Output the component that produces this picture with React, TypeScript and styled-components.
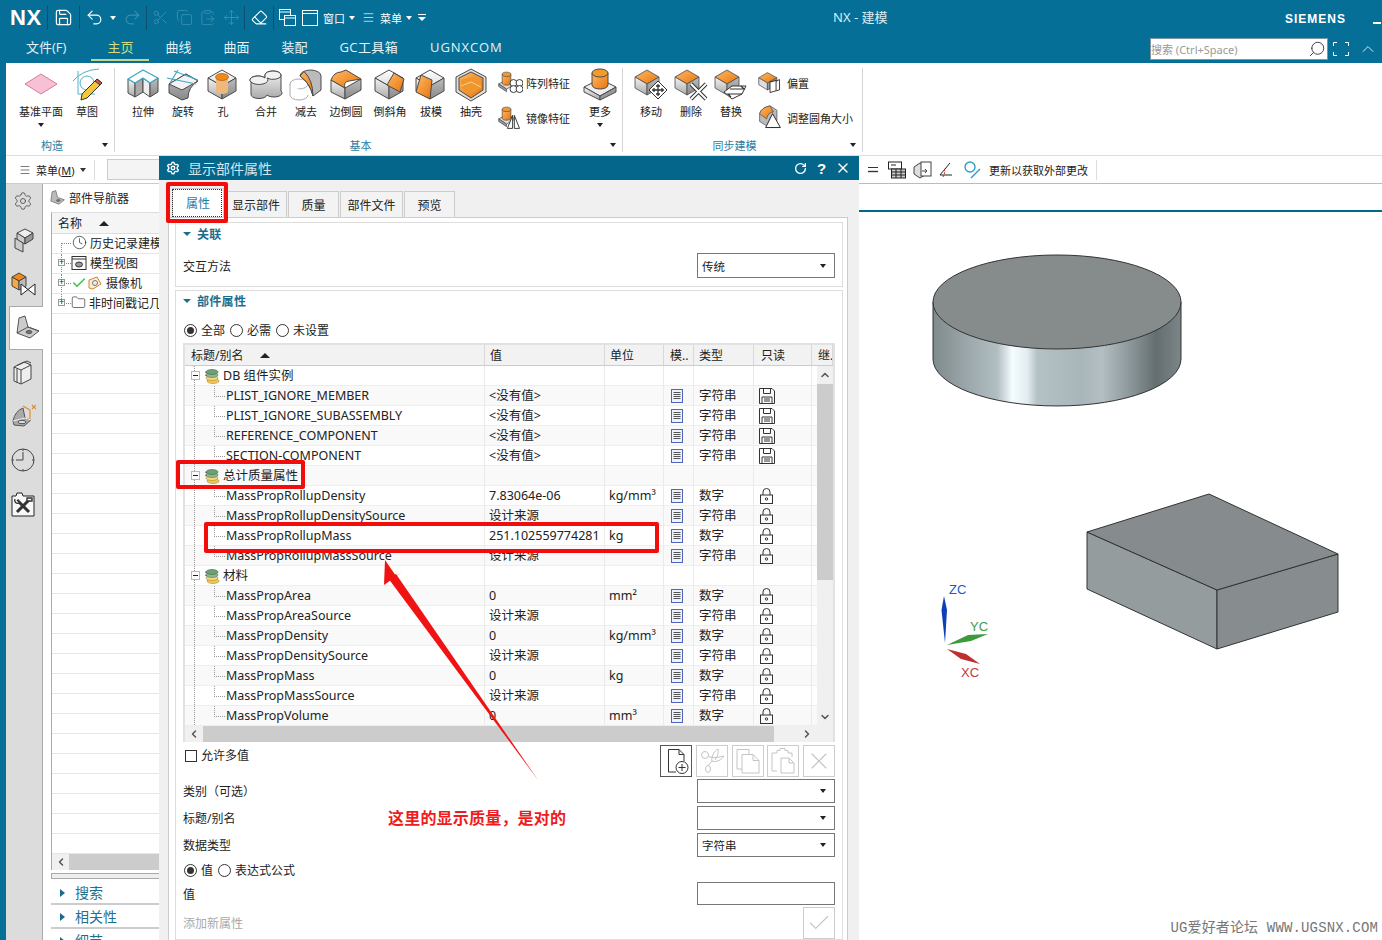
import React from "react";
import styled, { createGlobalStyle } from "styled-components";
import {
  Save, Undo2, Redo2, Scissors, Copy, ClipboardPaste, Move, Eraser, Settings, Clock, Check, Folder, Search,
  RotateCw, X, ChevronUp, ChevronDown, ChevronLeft, ChevronRight, Menu as MenuIcon,
} from "lucide-react";

const FONT = `"Noto Sans", "Noto Sans CJK SC", sans-serif`;
const TEAL = "#056f97";
const DARK = "#04668a";

const Global = createGlobalStyle`
  html, body { margin: 0; padding: 0; width: 1382px; height: 940px; overflow: hidden; background: #fff; }
  * { box-sizing: border-box; }
  body { font-family: ${FONT}; font-size: 12px; color: #222; }
`;

const Root = styled.div`
  position: relative; width: 1382px; height: 940px; overflow: hidden; background: ${TEAL};
  display: flex; flex-direction: column;
`;
const Hidden = styled.svg`position: absolute; width: 0; height: 0;`;

/* ---------- title bar ---------- */
const TitleBar = styled.header`height: 63px; flex: none; display: flex; flex-direction: column; color: #fff;`;
const QuickRow = styled.div`height: 35px; display: flex; align-items: center; padding-left: 10px;`;
const Logo = styled.div`width: 37px; font: 700 22px/1 "Liberation Sans", sans-serif; letter-spacing: .6px;`;
const QuickSep = styled.div`width: 1px; height: 24px; background: #0b4f6c; flex: none;`;
const Slot = styled.div<{ $w: number; $off?: boolean }>`
  width: ${(p) => p.$w}px; flex: none; display: flex; align-items: center; justify-content: center;
  color: ${(p) => (p.$off ? "#3a8fae" : "#fff")};
`;
const Caret = styled.span<{ $c?: string }>`
  width: 0; height: 0; flex: none; border-left: 3px solid transparent; border-right: 3px solid transparent;
  border-top: 4px solid ${(p) => p.$c || "#fff"};
`;
const QuickText = styled.span`width: 22px; margin-left: 3px; font-size: 11px; flex: none; white-space: nowrap;`;
const AppTitle = styled.div`position: absolute; left: 833px; top: 10px; font-size: 13px; line-height: 15px; color: #dcebf1; white-space: nowrap;`;
const Siemens = styled.div`position: absolute; left: 1285px; top: 12px; font: 900 12px/15px "Liberation Sans", sans-serif; letter-spacing: 1px; color: #fff;`;
const Minimize = styled.div`position: absolute; left: 1373px; top: 22px; width: 8px; height: 2px; background: #fff;`;
const TabRow = styled.nav`height: 28px; display: flex; padding-left: 10px; align-items: stretch;`;
const MainTab = styled.div<{ $active?: boolean; $mr?: number; $ls?: number }>`
  padding: 0 16px; margin-right: ${(p) => p.$mr || 0}px; font: 13px/25px "Open Sans", "Noto Sans CJK SC", sans-serif; white-space: nowrap;
  letter-spacing: ${(p) => p.$ls || 0}px;
  height: 26px; color: ${(p) => (p.$active ? "#d6dc82" : "#e6f2f6")};
  border-bottom: 2px solid ${(p) => (p.$active ? "#c9d28a" : "transparent")};
`;
const RightTools = styled.div`margin-left: auto; display: flex; align-items: center; height: 26px; color: #fff;`;
const SearchBox = styled.div`
  width: 178px; height: 22px; margin-top: 2px; background: #fff; border: 1px solid #7f97a4; display: flex; align-items: center;
  font-size: 11px; color: #999; justify-content: space-between; padding-right: 1px;
`;
const ToolSlot = styled.div<{ $w: number }>`width: ${(p) => p.$w}px; display: flex; justify-content: center; margin-top: 2px;`;
const Mirrored = styled.span`display: flex; transform: scaleX(-1);`;

/* ---------- ribbon ---------- */
const Ribbon = styled.section`
  margin-left: 6px; height: 93px; flex: none; background: #fff; border-bottom: 1px solid #ddd; display: flex; align-items: flex-start;
`;
const Group = styled.div<{ $w: number }>`
  width: ${(p) => p.$w}px; height: 84px; margin-top: 5px; flex: none; border-right: 1px solid #d5d5d5; display: flex; flex-direction: column;
`;
const GroupItems = styled.div`height: 71px; display: flex; align-items: flex-start;`;
const GroupFoot = styled.div`height: 15px; display: flex; align-items: center; color: #2a7d9e; font-size: 11px; padding-right: 6px;`;
const GroupName = styled.span`flex: 1; text-align: center; padding-right: 4px;`;
const Item = styled.div<{ $w: number; $ml?: number }>`
  width: ${(p) => p.$w}px; margin-left: ${(p) => p.$ml || 0}px; flex: none; display: flex; flex-direction: column; align-items: center;
  font-size: 11px; line-height: 16px; white-space: nowrap;
`;
const ItemIcon = styled.svg`width: 34px; height: 34px; margin-bottom: 2px; display: block;`;
const ItemCaret = styled.div`margin-top: 3px; display: flex;`;
const Stack = styled.div<{ $w: number; $ml: number }>`
  width: ${(p) => p.$w}px; margin: -3px 0 0 ${(p) => p.$ml}px; flex: none; display: flex; flex-direction: column;
`;
const StackRow = styled.div`height: 35px; display: flex; align-items: center; gap: 3px; font-size: 11px; white-space: nowrap;`;
const StackIcon = styled.svg<{ $gap?: number }>`width: 26px; height: 26px; flex: none; margin-right: ${(p) => p.$gap || 0}px;`;

/* ---------- body ---------- */
const Body = styled.main`margin-left: 6px; flex: 1; min-height: 0; display: flex; background: #fff;`;
const LeftCol = styled.aside`width: 153px; flex: none; display: flex; flex-direction: column;`;
const MenuBar = styled.div`height: 28px; flex: none; display: flex; align-items: center; padding-left: 13px; font-size: 11px; border-bottom: 1px solid #ccc;`;
const MenuLabel = styled.span`margin: 0 5px 0 5px; white-space: nowrap; u { text-decoration: underline; }`;
const MenuSep = styled.div`width: 1px; height: 20px; background: #ddd; margin: 0 12px 0 8px;`;
const MenuInput = styled.div`flex: 1; height: 21px; background: #f4f4f4; border: 1px solid #ccc; border-right: none;`;
const Workspace = styled.div`flex: 1; min-height: 0; display: flex;`;
const Strip = styled.div`width: 37px; flex: none; background: #dcdcdc; border-right: 1px solid #aaa; display: flex; flex-direction: column; align-items: flex-end;`;
const StripItem = styled.div<{ $active?: boolean }>`
  width: ${(p) => (p.$active ? 34 : 37)}px; height: 44px; flex: none; display: flex; align-items: center; justify-content: center;
  color: #555; padding-right: ${(p) => (p.$active ? 0 : 2)}px;
  ${(p) => p.$active && "background:#fff;border:1px solid #aaa;border-right:none;margin-right:-1px;position:relative;"}
  &:first-child { height: 34px; }
`;
const StripIcon = styled.svg`width: 26px; height: 26px;`;
const Nav = styled.div`width: 116px; flex: none; display: flex; flex-direction: column; overflow: hidden;`;
const NavHead = styled.div`height: 28px; flex: none; display: flex; align-items: center; gap: 4px; padding-left: 6px; font-size: 12px; white-space: nowrap;`;
const Tree = styled.div`margin-left: 8px; flex: none; height: 658px; border-left: 1px solid #aaa; border-top: 1px solid #ddd; display: flex; flex-direction: column; overflow: hidden;`;
const TreeHead = styled.div`height: 21px; flex: none; background: #f5f5f5; border-bottom: 1px solid #ddd; display: flex; align-items: center; padding-left: 6px; gap: 17px; font-size: 12px;`;
const SortUp = styled.span`width: 0; height: 0; border-left: 5px solid transparent; border-right: 5px solid transparent; border-bottom: 5px solid #222;`;
const TreeRows = styled.div`flex: 1; overflow: hidden;`;
const TreeRow = styled.div<{ $guide?: boolean; $last?: boolean; $first?: boolean }>`
  position: relative; height: 20px; border-bottom: 1px solid #e6e6e6; display: flex; align-items: center; white-space: nowrap; font-size: 12px; padding: 0 0 2px 6px; gap: 3px; overflow: hidden;
  svg { flex: none; position: relative; z-index: 1; }
  ${(p) => p.$guide && `&::before { content: ""; position: absolute; left: 9px; top: ${p.$first ? 9 : 0}px; height: ${p.$last ? 9 : p.$first ? 11 : 20}px; border-left: 1px dotted #888; }
    &::after { content: ""; position: absolute; left: 9px; top: 9px; width: 10px; border-top: 1px dotted #888; }`}
`;
const Plus = styled.span`
  position: relative; z-index: 1; width: 7px; height: 7px; flex: none; border: 1px solid #999; background: #fff; color: #222; font: 9px/5px "Liberation Sans", sans-serif; text-align: center; margin-right: 3px;
`;
const NavSpacer = styled.span`width: 11px; flex: none;`;
const TreeIcon = styled.svg`width: 16px; height: 16px; flex: none;`;
const CheckMark = styled(Check)`margin-right: -3px;`;
const NavScroll = styled.div`height: 16px; flex: none; display: flex; background: #f0f0f0;`;
const NavScrollBtn = styled.div`width: 17px; display: flex; align-items: center; justify-content: center; color: #555;`;
const NavScrollThumb = styled.div`flex: 1; background: #ccc;`;
const Sash = styled.div`margin: 3px 0 0 8px; height: 6px; flex: none; border: 1px solid #aaa; border-right: none; background: #eee;`;
const Fold = styled.div<{ $h: number }>`
  height: ${(p) => p.$h}px; flex: none; margin-left: 8px; border-bottom: 2px solid #ccc; display: flex; align-items: flex-end; padding: 0 0 2px 9px; gap: 10px;
  font-size: 14px; line-height: 16px; color: #1f6f8f; white-space: nowrap;
`;
const FoldArrow = styled.span`width: 0; height: 0; margin-bottom: 4px; border-top: 4px solid transparent; border-bottom: 4px solid transparent; border-left: 5px solid #1a6b8c;`;

/* ---------- dialog ---------- */
const Dialog = styled.section`width: 700px; flex: none; background: #f0f0f0; display: flex; flex-direction: column; overflow: hidden;`;
const DialogHead = styled.div`height: 24px; flex: none; background: ${DARK}; color: #d3e7ef; display: flex; align-items: center; padding: 0 6px 0 7px; font-size: 14px;`;
const DialogTitle = styled.span`margin-left: 8px; flex: 1;`;
const HeadBtn = styled.span`width: 21px; display: flex; justify-content: center; color: #fff; font: 700 15px/1 "Liberation Sans", sans-serif;`;
const DTabs = styled.div`height: 29px; margin: 8px 0 0 13px; flex: none; display: flex; align-items: flex-end; font-size: 12px;`;
const DTab = styled.div<{ $w: number; $active?: boolean }>`
  width: ${(p) => p.$w}px; height: ${(p) => (p.$active ? 29 : 26)}px; display: flex; align-items: center; justify-content: center; white-space: nowrap;
  border: 1px solid #ccc; border-bottom: none; margin-right: 1px;
  background: ${(p) => (p.$active ? "#fff" : "#f3f3f3")}; color: ${(p) => (p.$active ? "#1f7ea6" : "#222")};
`;
const Panel = styled.div`flex: 1; min-height: 0; margin: 0 11px 0 9px; background: #fff; border: 1px solid #ccc; border-bottom: none; padding: 4px 4px 0 6px; display: flex; flex-direction: column; gap: 3px; overflow: hidden;`;
const Sect = styled.div<{ $grow?: boolean }>`
  border: 1px solid #ddd; padding: 0 7px; flex: ${(p) => (p.$grow ? "1" : "none")}; min-height: 0; ${(p) => !p.$grow && "height: 65px;"}
`;
const SectHead = styled.div<{ $h: number }>`
  height: ${(p) => p.$h}px; padding-bottom: 2px; display: flex; align-items: center; gap: 6px; font-weight: 700; color: #1a6f91; font-size: 12px; letter-spacing: .3px;
`;
const SectArrow = styled.span`width: 0; height: 0; border-left: 4px solid transparent; border-right: 4px solid transparent; border-top: 4px solid #1a6f91;`;
const LineRow = styled.div<{ $h: number; $mt?: number }>`
  height: ${(p) => p.$h}px; margin-top: ${(p) => p.$mt || 0}px; display: flex; align-items: center; justify-content: space-between; font-size: 12px; white-space: nowrap;
`;
const Dim = styled.span`color: #aaa;`;
const Select = styled.div`
  width: 138px; height: 100%; border: 1px solid #777; background: #fff; display: flex; align-items: center; justify-content: space-between; padding: 0 8px 0 4px; font-size: 11.5px;
`;
const TextInput = styled.div`width: 138px; height: 100%; border: 1px solid #777; background: #fff;`;
const Radios = styled.div`display: flex; align-items: center; height: 100%; padding-left: 1px;`;
const Radio = styled.span<{ $on?: boolean }>`
  width: 13px; height: 13px; flex: none; border: 1px solid #333; border-radius: 50%; margin-right: 4px; display: flex; align-items: center; justify-content: center;
  &::after { content: ""; width: 7px; height: 7px; border-radius: 50%; background: ${(p) => (p.$on ? "#333" : "transparent")}; }
`;
const RadioText = styled.span`margin-right: 5px;`;
const CheckBox = styled.span`width: 12px; height: 12px; border: 1px solid #333; margin: 5px 4px 0 2px; flex: none; display: inline-block;`;

const Table = styled.div`margin-top: 3px; height: 399px; border: 2px solid #e2e2e2; display: flex; flex-direction: column;`;
const COLS = "300px 120px 59px 30px 60px 58px";
const THead = styled.div`height: 21px; flex: none; display: grid; grid-template-columns: ${COLS} 21px; background: #f2f2f2; border-bottom: 1px solid #ccc;`;
const TH = styled.div<{ $pad?: number }>`
  padding-left: ${(p) => p.$pad ?? 5}px; border-right: 1px solid #d8d8d8; display: flex; align-items: center; gap: 17px; font-size: 12px; white-space: nowrap; overflow: hidden;
`;
const TMid = styled.div`height: 360px; flex: none; display: flex;`;
const TRows = styled.div`width: 632px; flex: none; overflow: hidden;`;
const TRow = styled.div<{ $odd: boolean }>`
  height: 20px; display: grid; grid-template-columns: ${COLS} 5px; background: ${(p) => (p.$odd ? "#fff" : "#f9f9f9")}; border-bottom: 1px solid #eee;
  font-size: 12.5px; line-height: 19px;
`;
const TD = styled.div<{ $pad?: number }>`padding-left: ${(p) => p.$pad ?? 4}px; border-right: 1px solid #eaeaea; white-space: nowrap; overflow: visible; display: flex; align-items: center;`;
const NameCell = styled.div<{ $child?: boolean }>`
  position: relative; border-right: 1px solid #eaeaea; display: flex; align-items: center; white-space: nowrap;
  padding-left: ${(p) => (p.$child ? 41 : 6)}px;
  &::before { content: ""; position: absolute; left: 9px; top: 0; bottom: 0; border-left: 1px dotted #999; }
  ${(p) => p.$child && `&::after { content: ""; position: absolute; left: 29px; top: 0; width: 10px; height: 10px; border-left: 1px dotted #999; border-bottom: 1px dotted #999; }`}
`;
const Minus = styled.span`
  position: relative; z-index: 1; width: 9px; height: 9px; flex: none; background: #fff; border: 1px solid #bbb; margin-right: 4px;
  &::after { content: ""; position: absolute; left: 1px; top: 3px; width: 5px; height: 1px; background: #222; }
`;
const DbSvg = styled.svg`width: 16px; height: 16px; margin-right: 3px; flex: none;`;
const VScroll = styled.div`width: 16px; flex: none; background: #f0f0f0; display: flex; flex-direction: column; align-items: center; color: #555;`;
const VBtn = styled.div`height: 18px; flex: none; display: flex; align-items: center; justify-content: center;`;
const VThumb = styled.div`height: 196px; width: 100%; flex: none; background: #ccc;`;
const VRest = styled.div`flex: 1;`;
const HScroll = styled.div`height: 16px; flex: none; background: #f0f0f0; display: flex; color: #555;`;
const HBtn = styled.div`width: 18px; flex: none; display: flex; align-items: center; justify-content: center;`;
const HThumb = styled.div`width: 571px; flex: none; background: #ccc;`;
const HRest = styled.div`flex: 1;`;
const HCorner = styled.div`width: 17px; flex: none;`;
const BtnRow = styled.div`height: 32px; margin-top: 3px; display: flex; align-items: flex-start; font-size: 12px; line-height: 22px;`;
const BtnSet = styled.div`margin-left: auto; display: flex; gap: 3.75px;`;
const IconBtn = styled.div<{ $on?: boolean }>`
  width: 32px; height: 32px; display: flex; align-items: center; justify-content: center; background: #fff;
  border: 1px solid ${(p) => (p.$on ? "#555" : "#ccc")}; color: ${(p) => (p.$on ? "#333" : "#c4c4c4")};
`;
const BtnIcon = styled.svg`width: 28px; height: 28px; fill: none; stroke: currentColor; stroke-width: 1;`;

/* ---------- right area ---------- */
const Right = styled.section`flex: 1; min-width: 0; display: flex; flex-direction: column; background: #fff;`;
const RBar = styled.div`height: 28px; flex: none; display: flex; align-items: center; border-bottom: 1px solid #bbb; padding-left: 6px; font-size: 11px;`;
const RSlot = styled.div<{ $w: number }>`width: ${(p) => p.$w}px; flex: none; display: flex; justify-content: center;`;
const RIcon = styled.svg`width: 20px; height: 20px;`;
const RText = styled.span`margin-left: 6px; white-space: nowrap;`;
const RSep = styled.div`width: 1px; height: 20px; background: #ddd; margin-left: 8px;`;
const ViewTop = styled.div`height: 26px; flex: none;`;
const ViewLine = styled.div`height: 2px; flex: none; background: ${DARK};`;
const Viewport = styled.div`flex: 1; position: relative; min-height: 0;`;
const ModelSvg = styled.svg`position: absolute; inset: 0; width: 100%; height: 100%; font-family: "Liberation Sans", sans-serif;`;
const Watermark = styled.div`
  position: absolute; right: 4px; bottom: 4px; font: 14px/16px "Liberation Mono", "Noto Sans CJK SC", monospace; color: #777; white-space: nowrap; letter-spacing: .15px;
`;

/* ---------- annotations ---------- */
const RedBox = styled.div<{ $x: number; $y: number; $w: number; $h: number }>`
  position: absolute; left: ${(p) => p.$x}px; top: ${(p) => p.$y}px; width: ${(p) => p.$w}px; height: ${(p) => p.$h}px;
  border: 4px solid #f20d0d; border-radius: 2px; pointer-events: none;
`;
const FocusDot = styled.div`position: absolute; left: 172px; top: 189px; width: 50px; height: 28px; border: 1px dotted #333;`;
const ArrowSvg = styled.svg`position: absolute; left: 0; top: 0; width: 1382px; height: 940px; pointer-events: none;`;
const Note = styled.div`position: absolute; left: 388px; top: 808px; font-size: 16px; line-height: 20px; font-weight: 700; color: #ee1c1c; white-space: nowrap; letter-spacing: .2px;`;

/* ---------- drawings ---------- */
const S = "#4a4a4a";
const Cube = ({ top = "url(#gLight)" }: { top?: string }) => (
  <g stroke={S} strokeWidth="1" strokeLinejoin="round">
    <polygon points="16,2 30,10 16,18 2,10" fill={top} />
    <polygon points="2,10 16,18 16,31 2,23" fill="url(#gSideL)" />
    <polygon points="30,10 16,18 16,31 30,23" fill="url(#gSideR)" />
  </g>
);
const OCube = () => (
  <g stroke={S} strokeWidth=".8" strokeLinejoin="round">
    <polygon points="13,2 25,9 13,16 1,9" fill="url(#gOrange)" />
    <polygon points="1,9 13,16 13,27 1,20" fill="url(#gSideL)" />
    <polygon points="25,9 13,16 13,27 25,20" fill="url(#gSideR)" />
  </g>
);
const SmallCyl = () => (
  <g stroke={S} strokeWidth=".8">
    <polygon points="1,16 11,11 20,16 10,22" fill="#ddd" />
    <polygon points="1,16 10,22 10,25 1,19" fill="#999" />
    <path d="M5,5 v10 a5,2.5 0 0 0 10,0 v-10 z" fill="url(#gOrange)" />
    <ellipse cx="10" cy="5" rx="5" ry="2.5" fill="#f49a2c" />
  </g>
);
const Icons: Record<string, React.ReactNode> = {
  plane: <polygon points="1,16 17,6 33,16 17,26" fill="#f7c0d5" stroke="#d87a9c" strokeWidth="1" />,
  sketch: (
    <g>
      <path d="M3,13 Q12,2 29,1" fill="none" stroke="#4fb2cc" />
      <path d="M8,3 V26 H25" fill="none" stroke="#4fb2cc" />
      <circle cx="17" cy="15" r="7" fill="none" stroke="#4fb2cc" />
      <path d="M27,11 l5,4 l-15,15 l-6,2 l1,-6 z" fill="#f2c83a" stroke="#333" />
      <path d="M27,11 l5,4 l-2,2 l-5,-4 z" fill="#d9534f" stroke="#333" />
    </g>
  ),
  extrude: (
    <g stroke={S} strokeLinejoin="round">
      <polygon points="2,11 9,15 9,29 2,25" fill="url(#gSideL)" />
      <polygon points="9,15 17,10 17,24 9,29" fill="#aaa" />
      <polygon points="17,10 24,15 24,29 17,24" fill="#eee" />
      <polygon points="24,15 32,10 32,24 24,29" fill="url(#gSideR)" />
      <polygon points="2,11 17,2 32,10 24,15 17,10 9,15" fill="#fff" stroke="#3fa9c7" strokeWidth="1.4" />
    </g>
  ),
  revolve: (
    <g strokeLinejoin="round">
      <path d="M3,16 L20,6 L32,13 Q22,19 22,30 L16,32 L3,25 z" fill="url(#gSideR)" stroke={S} />
      <polygon points="3,16 20,6 32,13 16,22" fill="#f3f3f3" stroke={S} />
      <path d="M1,10 L30,16 M8,3 L32,12 M12,2 L4,15" stroke="#3fa9c7" strokeWidth="1.2" fill="none" />
    </g>
  ),
  hole: (
    <g>
      <Cube />
      <path d="M10,9 V23 a6,3 0 0 0 12,0 V9 z" fill="#efb77c" />
      <ellipse cx="16" cy="9" rx="6.5" ry="3.5" fill="#f08a1c" stroke="#a65a10" strokeWidth=".7" />
    </g>
  ),
  unite: (
    <g stroke={S} strokeLinejoin="round">
      <path d="M2,14 V26 a8,4 0 0 0 16,1 a8,4 0 0 0 14,-4 V7 a8,4 0 0 0 -16,0 V10 a8,4 0 0 0 -14,4 z" fill="url(#gSideL)" />
      <path d="M2,14 a8,4 0 0 1 14,-4 V7 a8,4 0 0 1 16,0 a8,4 0 0 1 -14,3 a8,4 0 0 1 -16,4z" fill="#f2f2f2" />
    </g>
  ),
  subtract: (
    <g stroke={S} strokeLinejoin="round">
      <ellipse cx="10" cy="16" rx="9" ry="5" fill="#fff" stroke="#aaa" />
      <path d="M1,16 V27 a9,5 0 0 0 18,0" fill="#fff" stroke="#aaa" />
      <path d="M11,8 A10.5,6 0 0 1 32,8 V22 L24,28 Q21,15 11,8 z" fill="#bbb" />
      <path d="M11,8 L15,3.5 Q24,12 24,28 Q21,15 11,8 z" fill="url(#gOrange)" />
    </g>
  ),
  blend: (
    <g stroke={S} strokeLinejoin="round">
      <polygon points="2,12 16,20 16,31 2,24" fill="url(#gSideL)" />
      <polygon points="32,11 16,20 16,31 32,22" fill="url(#gSideR)" />
      <path d="M2,12 Q5,4 12,4 L17,2 L32,11 L20,13 Q14,14 16,20 z" fill="url(#gOrange)" />
    </g>
  ),
  chamfer: (
    <g stroke={S} strokeLinejoin="round">
      <Cube />
      <polygon points="21,5 31,11 27,24 14,17" fill="url(#gOrange)" />
    </g>
  ),
  draft: (
    <g stroke={S} strokeLinejoin="round">
      <Cube />
      <polygon points="7,7 18,12 16,31 2,24" fill="url(#gOrange)" />
    </g>
  ),
  shell: (
    <g stroke={S} strokeLinejoin="round">
      <polygon points="17,1 32,9 32,24 17,33 2,24 2,9" fill="#ddd" />
      <polygon points="17,4 29,10 29,22 17,30 5,22 5,10" fill="url(#gOrange)" />
      <polygon points="7,12 20,8 27,13 27,20 17,26 7,20" fill="#f0962e" stroke="none" />
      <path d="M7,18 L17,14 L27,19" stroke="#ffd08a" fill="none" />
    </g>
  ),
  more: (
    <g stroke={S} strokeWidth="1" strokeLinejoin="round">
      <polygon points="1,19 17,11 33,19 17,28" fill="#eee" />
      <polygon points="1,19 17,28 17,32 1,24" fill="url(#gSideL)" />
      <polygon points="33,19 17,28 17,32 33,24" fill="#999" />
      <path d="M9,5 V17 a8,4 0 0 0 16,0 V5 z" fill="url(#gOrange)" />
      <ellipse cx="17" cy="5" rx="8" ry="4" fill="#f49a2c" />
    </g>
  ),
  move: (
    <g>
      <OCube />
      <polygon points="24,13 33,22 24,31 15,22" fill="#fff" stroke="#333" />
      <path d="M24,16 v12 M18,22 h12 M22,18 h4 M22,26 h4 M20,20 v4 M28,20 v4" stroke="#333" strokeWidth="1.3" fill="none" />
    </g>
  ),
  del: (
    <g>
      <OCube />
      <path d="M17,16 L32,31 M32,16 L17,31" stroke="#333" strokeWidth="4" />
      <path d="M17,16 L32,31 M32,16 L17,31" stroke="#fff" strokeWidth="2" />
    </g>
  ),
  replace: (
    <g>
      <OCube />
      <polygon points="10,24 18,18 32,18 28,26 18,31" fill="#fff" stroke="#333" />
      <path d="M16,21 h14 l-3,-3 M28,26 h-14 l3,3" stroke="#333" fill="none" strokeWidth="1.2" />
    </g>
  ),
  pattern: (
    <g>
      <SmallCyl />
      <g fill="#fff" stroke="#222" strokeWidth="1">
        <circle cx="18" cy="15" r="4" /><circle cx="25" cy="15" r="4" /><circle cx="18" cy="22" r="4" /><circle cx="25" cy="22" r="4" />
      </g>
    </g>
  ),
  mirror: (
    <g>
      <SmallCyl />
      <path d="M11,27 L17,12 V27 z M19,27 V12 L25,27 z" fill="#fff" stroke="#222" />
    </g>
  ),
  offset: (
    <g>
      <g stroke={S} strokeWidth=".8"><polygon points="11,3 22,9 11,15 1,9" fill="url(#gOrange)" /><polygon points="1,9 11,15 11,23 1,17" fill="#ddd" /><polygon points="22,9 11,15 11,23 22,17" fill="#999" /></g>
      <path d="M14,14 l7,-2 v12 l-7,2 z M21,13 l4,-2 v12 l-4,1" fill="#fff" stroke="#222" />
    </g>
  ),
  resize: (
    <g stroke={S} strokeWidth=".8">
      <path d="M2,10 Q4,3 14,1 L22,6 L22,18 L10,24 L2,19 z" fill="#bbb" />
      <path d="M2,10 Q4,3 14,1 L18,8 Q12,8 10,16 z" fill="url(#gOrange)" />
      <path d="M17,10 L26,26 H9 z" fill="#fff" stroke="#222" strokeWidth="1.1" />
    </g>
  ),
};
const Rib = ({ k, label, w, ml, caret }: { k: string; label: string; w: number; ml?: number; caret?: boolean }) => (
  <Item $w={w} $ml={ml}>
    <ItemIcon viewBox="0 0 34 34">{Icons[k]}</ItemIcon>
    {label}
    {caret && <ItemCaret><Caret $c="#222" /></ItemCaret>}
  </Item>
);
const StackItem = ({ k, label, gap }: { k: string; label: string; gap?: number }) => (
  <StackRow>
    <StackIcon $gap={gap} viewBox="0 0 28 30">{Icons[k]}</StackIcon>
    {label}
  </StackRow>
);

const DocIcon = () => (
  <svg width="12" height="14" viewBox="0 0 12 14">
    <rect x=".5" y=".5" width="11" height="13" fill="#eef1ff" stroke="#4d63c0" />
    <path d="M2.5,3.5 h7 M2.5,5.5 h7 M2.5,7.5 h7 M2.5,9.5 h7" stroke="#555" />
  </svg>
);
const FloppyIcon = () => (
  <svg width="16" height="16" viewBox="0 0 16 16" fill="none" stroke="#333">
    <path d="M.5,.5 H13 L15.5,3 V15.5 H.5 z" />
    <path d="M4.5,.5 V5.5 H11.5 V.5 M3,15.5 V9 H13 V15.5 M5,11 H11 M5,13 H11" />
  </svg>
);
const LockIcon = () => (
  <svg width="13" height="16" viewBox="0 0 13 16" fill="none" stroke="#333">
    <rect x=".5" y="7" width="12" height="8.5" />
    <path d="M3,7 V4 a3.5,3.5 0 0 1 7,0 V7" />
    <circle cx="6.5" cy="11" r="1.2" />
  </svg>
);
const DbIcon = () => (
  <DbSvg viewBox="0 0 16 16">
    <ellipse cx="9" cy="13" rx="6" ry="2.5" fill="#f1c75b" stroke="#a88a2c" strokeWidth=".6" />
    <ellipse cx="8" cy="10" rx="6" ry="2.5" fill="#f4d77e" stroke="#a88a2c" strokeWidth=".6" />
    <ellipse cx="8" cy="7" rx="6" ry="2.5" fill="#8fb78a" stroke="#4e7a50" strokeWidth=".6" />
    <ellipse cx="8" cy="4" rx="6" ry="2.5" fill="#6f9f77" stroke="#3e6a48" strokeWidth=".6" />
    <path d="M3,5 L1,4 M3,8 L1,7" stroke="#555" strokeWidth=".8" />
  </DbSvg>
);

type Row = { group?: string; name?: string; value?: string; unit?: string; type?: string; ro?: "f" | "l" };
const rows: Row[] = [
  { group: "DB 组件实例" },
  { name: "PLIST_IGNORE_MEMBER", value: "<没有值>", type: "字符串", ro: "f" },
  { name: "PLIST_IGNORE_SUBASSEMBLY", value: "<没有值>", type: "字符串", ro: "f" },
  { name: "REFERENCE_COMPONENT", value: "<没有值>", type: "字符串", ro: "f" },
  { name: "SECTION-COMPONENT", value: "<没有值>", type: "字符串", ro: "f" },
  { group: "总计质量属性" },
  { name: "MassPropRollupDensity", value: "7.83064e-06", unit: "kg/mm³", type: "数字", ro: "l" },
  { name: "MassPropRollupDensitySource", value: "设计来源", type: "字符串", ro: "l" },
  { name: "MassPropRollupMass", value: "251.102559774281", unit: "kg", type: "数字", ro: "l" },
  { name: "MassPropRollupMassSource", value: "设计来源", type: "字符串", ro: "l" },
  { group: "材料" },
  { name: "MassPropArea", value: "0", unit: "mm²", type: "数字", ro: "l" },
  { name: "MassPropAreaSource", value: "设计来源", type: "字符串", ro: "l" },
  { name: "MassPropDensity", value: "0", unit: "kg/mm³", type: "数字", ro: "l" },
  { name: "MassPropDensitySource", value: "设计来源", type: "字符串", ro: "l" },
  { name: "MassPropMass", value: "0", unit: "kg", type: "数字", ro: "l" },
  { name: "MassPropMassSource", value: "设计来源", type: "字符串", ro: "l" },
  { name: "MassPropVolume", value: "0", unit: "mm³", type: "数字", ro: "l" },
];
const blanks = Array.from({ length: 27 }, (_, i) => i);

const ArrowDown = () => <Caret $c="#222" />;

export default function App() {
  return (
    <Root>
      <Global />
      <Hidden>
        <defs>
          <linearGradient id="gOrange" x1="0" y1="0" x2="1" y2="1"><stop offset="0" stopColor="#ffb964" /><stop offset="1" stopColor="#e8740c" /></linearGradient>
          <linearGradient id="gLight" x1="0" y1="0" x2="0" y2="1"><stop offset="0" stopColor="#fff" /><stop offset="1" stopColor="#ddd" /></linearGradient>
          <linearGradient id="gSideL" x1="0" y1="0" x2="0" y2="1"><stop offset="0" stopColor="#f4f4f4" /><stop offset="1" stopColor="#aaa" /></linearGradient>
          <linearGradient id="gSideR" x1="0" y1="0" x2="0" y2="1"><stop offset="0" stopColor="#bdbdbd" /><stop offset="1" stopColor="#888" /></linearGradient>
          <linearGradient id="gCyl" x1="0" y1="0" x2="1" y2="0">
            <stop offset="0" stopColor="#7f8a8c" /><stop offset=".12" stopColor="#97a3a6" /><stop offset=".26" stopColor="#b2bfc2" />
            <stop offset=".32" stopColor="#f4fcfe" /><stop offset=".38" stopColor="#e3edf0" /><stop offset=".42" stopColor="#b4c2c5" />
            <stop offset=".6" stopColor="#a9b6b9" /><stop offset=".68" stopColor="#b3bfc3" /><stop offset=".8" stopColor="#8a9599" />
            <stop offset=".9" stopColor="#646e70" /><stop offset="1" stopColor="#7c8587" />
          </linearGradient>
        </defs>
      </Hidden>

      <TitleBar>
        <QuickRow>
          <Logo>NX</Logo>
          <QuickSep />
          <Slot $w={31}><Save size={19} strokeWidth={1.5} /></Slot>
          <QuickSep />
          <Slot $w={28}><Undo2 size={19} strokeWidth={1.4} /></Slot>
          <Slot $w={10}><Caret /></Slot>
          <Slot $w={28} $off><Redo2 size={19} strokeWidth={1.4} /></Slot>
          <QuickSep />
          <Slot $w={26} $off><Scissors size={17} strokeWidth={1.3} /></Slot>
          <Slot $w={23} $off><Copy size={17} strokeWidth={1.3} /></Slot>
          <Slot $w={23} $off><ClipboardPaste size={17} strokeWidth={1.3} /></Slot>
          <Slot $w={25} $off><Move size={17} strokeWidth={1.3} /></Slot>
          <QuickSep />
          <Slot $w={28}><Eraser size={17} strokeWidth={1.5} /></Slot>
          <QuickSep />
          <Slot $w={26}>
            <svg width="17" height="17" viewBox="0 0 17 17" fill={TEAL} stroke="#fff"><rect x=".5" y=".5" width="11" height="10" /><rect x="5.5" y="6.5" width="11" height="10" /><path d="M.5,3 h11 M5.5,9 h11" /></svg>
          </Slot>
          <Slot $w={20}>
            <svg width="16" height="16" viewBox="0 0 16 16" fill="none" stroke="#fff"><rect x=".5" y=".5" width="15" height="15" /><path d="M.5,3.5 h15" /></svg>
          </Slot>
          <QuickText>窗口</QuickText>
          <Slot $w={14}><Caret /></Slot>
          <Slot $w={18}><MenuIcon size={13} strokeWidth={1.3} /></Slot>
          <QuickText>菜单</QuickText>
          <Slot $w={14}><Caret /></Slot>
          <Slot $w={12}>
            <svg width="8" height="7" viewBox="0 0 8 7" fill="#fff"><rect width="8" height="1" /><polygon points="0,3 8,3 4,7" /></svg>
          </Slot>
        </QuickRow>
        <AppTitle>NX - 建模</AppTitle>
        <Siemens>SIEMENS</Siemens>
        <Minimize />
        <TabRow>
          <MainTab $mr={9}>文件(F)</MainTab>
          <MainTab $active>主页</MainTab>
          <MainTab>曲线</MainTab>
          <MainTab>曲面</MainTab>
          <MainTab>装配</MainTab>
          <MainTab $ls={0.4}>GC工具箱</MainTab>
          <MainTab $ls={0.9}>UGNXCOM</MainTab>
          <RightTools>
            <SearchBox>搜索 (Ctrl+Space)<Mirrored><Search size={18} strokeWidth={1.2} color="#333" /></Mirrored></SearchBox>
            <ToolSlot $w={26}>
              <svg width="16" height="14" viewBox="0 0 16 14" fill="none" stroke="#fff"><path d="M.5,4 V.5 H4 M12,.5 H15.5 V4 M.5,10 V13.5 H4 M12,13.5 H15.5 V10" /></svg>
            </ToolSlot>
            <ToolSlot $w={28}><ChevronUp size={20} strokeWidth={1} /></ToolSlot>
          </RightTools>
        </TabRow>
      </TitleBar>

      <Ribbon>
        <Group $w={109}>
          <GroupItems>
            <Rib k="plane" label="基准平面" w={60} ml={5} caret />
            <Rib k="sketch" label="草图" w={32} />
          </GroupItems>
          <GroupFoot><GroupName>构造</GroupName><ArrowDown /></GroupFoot>
        </Group>
        <Group $w={508}>
          <GroupItems>
            <Rib k="extrude" label="拉伸" w={40} ml={8} />
            <Rib k="revolve" label="旋转" w={40} />
            <Rib k="hole" label="孔" w={40} />
            <Rib k="unite" label="合并" w={40} ml={3} />
            <Rib k="subtract" label="减去" w={40} />
            <Rib k="blend" label="边倒圆" w={40} />
            <Rib k="chamfer" label="倒斜角" w={40} ml={4} />
            <Rib k="draft" label="拔模" w={40} ml={1} />
            <Rib k="shell" label="抽壳" w={40} />
            <Stack $w={83} $ml={6}>
              <StackItem k="pattern" label="阵列特征" />
              <StackItem k="mirror" label="镜像特征" />
            </Stack>
            <Rib k="more" label="更多" w={40} caret />
          </GroupItems>
          <GroupFoot><GroupName>基本</GroupName><ArrowDown /></GroupFoot>
        </Group>
        <Group $w={240}>
          <GroupItems>
            <Rib k="move" label="移动" w={40} ml={8} />
            <Rib k="del" label="删除" w={40} />
            <Rib k="replace" label="替换" w={40} />
            <Stack $w={100} $ml={6}>
              <StackItem k="offset" label="偏置" gap={1} />
              <StackItem k="resize" label="调整圆角大小" gap={1} />
            </Stack>
          </GroupItems>
          <GroupFoot><GroupName>同步建模</GroupName><ArrowDown /></GroupFoot>
        </Group>
      </Ribbon>

      <Body>
        <LeftCol>
          <MenuBar>
            <MenuIcon size={12} strokeWidth={1.2} />
            <MenuLabel>菜单(<u>M</u>)</MenuLabel>
            <Caret $c="#333" />
            <MenuSep />
            <MenuInput />
          </MenuBar>
          <Workspace>
            <Strip>
              <StripItem><Settings size={20} strokeWidth={1.1} /></StripItem>
              <StripItem>
                <StripIcon viewBox="0 0 26 26" stroke="#444" strokeLinejoin="round">
                  <polygon points="15,2 23,6 15,11 7,6" fill="#eee" />
                  <polygon points="7,6 15,11 15,17 7,13" fill="#ccc" />
                  <polygon points="23,6 15,11 15,17 23,12" fill="#999" />
                  <polygon points="5,11 13,16 13,25 5,21" fill="#ccc" />
                </StripIcon>
              </StripItem>
              <StripItem>
                <StripIcon viewBox="0 0 26 26" stroke="#444" strokeLinejoin="round">
                  <polygon points="9,2 16,6 9,10 2,6" fill="#f08a1c" />
                  <polygon points="2,6 9,10 9,19 2,15" fill="#f4a94a" />
                  <polygon points="16,6 9,10 9,19 16,15" fill="#bbb" />
                  <path d="M11,13 L25,24 V13 L11,24 z" fill="#fff" stroke="#222" />
                </StripIcon>
              </StripItem>
              <StripItem $active>
                <StripIcon viewBox="0 0 26 26" stroke="#555" strokeLinejoin="round">
                  <path d="M5,3 L11,1 L14,12 L25,16 L16,23 L3,18 z" fill="#ccc" />
                  <path d="M3,18 L14,12 L25,16" fill="none" />
                  <ellipse cx="15" cy="17" rx="3" ry="1.5" fill="#777" />
                </StripIcon>
              </StripItem>
              <StripItem>
                <StripIcon viewBox="0 0 26 26" fill="none" stroke="#444" strokeLinejoin="round">
                  <polygon points="4,8 14,3 21,6 21,20 11,25 4,22" fill="#eee" />
                  <path d="M4,8 L11,11 L21,6 M11,11 V25 M7,9.5 V23.5 M7,6.5 L17,2 L21,4" />
                </StripIcon>
              </StripItem>
              <StripItem>
                <StripIcon viewBox="0 0 26 26" stroke="#555" strokeLinejoin="round">
                  <path d="M3,18 Q5,8 13,5 L15,15 L21,17 L14,23 L4,22 z" fill="#aaa" />
                  <path d="M3,18 L15,15 L21,17" fill="none" stroke="#eee" />
                  <ellipse cx="12" cy="19" rx="4" ry="1.7" fill="#ddd" />
                  <path d="M13,3 L20,7 M22,2 l4,4 M26,2 l-4,4 M20,7 V16" stroke="#e08a2a" strokeWidth="1.1" fill="none" />
                </StripIcon>
              </StripItem>
              <StripItem>
                <StripIcon viewBox="0 0 26 26" fill="none" stroke="#444">
                  <circle cx="13" cy="13" r="11" />
                  <path d="M13,13 V5 M13,13 H6 M13,2 V4 M13,22 V24 M2,13 H4 M22,13 H24" />
                </StripIcon>
              </StripItem>
              <StripItem>
                <StripIcon viewBox="0 0 26 26" fill="#f8f8f8" stroke="#222">
                  <path d="M2,5 H6 L7,2 H12 L13,5 H24 V25 H2 z" />
                  <path d="M7,9 L19,21 M19,9 L7,21" strokeWidth="3" stroke="#333" />
                  <path d="M5,8 a3,3 0 0 0 4,4 M17,7 h5 v3 h-5 z" strokeWidth="1.4" stroke="#333" />
                </StripIcon>
              </StripItem>
            </Strip>
            <Nav>
              <NavHead>
                <TreeIcon viewBox="0 0 26 26" stroke="#555" strokeLinejoin="round">
                  <path d="M5,3 L11,1 L14,12 L25,16 L16,23 L3,18 z" fill="#bbb" />
                  <ellipse cx="15" cy="17" rx="3" ry="1.5" fill="#777" />
                </TreeIcon>
                部件导航器
              </NavHead>
              <Tree>
                <TreeHead>名称<SortUp /></TreeHead>
                <TreeRows>
                  <TreeRow $guide $first>
                    <NavSpacer />
                    <Clock size={15} strokeWidth={1.1} />历史记录建模
                  </TreeRow>
                  <TreeRow $guide>
                    <Plus>+</Plus>
                    <TreeIcon viewBox="0 0 16 16" fill="#fff" stroke="#333"><rect x="1" y="1.5" width="14" height="13" /><path d="M1,4 h14" /><ellipse cx="8" cy="9.5" rx="3.5" ry="2.5" fill="#999" /></TreeIcon>
                    模型视图
                  </TreeRow>
                  <TreeRow $guide>
                    <Plus>+</Plus>
                    <CheckMark size={16} color="#35c24a" strokeWidth={2.2} />
                    <TreeIcon viewBox="0 0 16 16" fill="none" stroke="#d9822b"><path d="M2,5 L10,2 L14,9 L6,14 L2,13 z" fill="#f8ecd8" /><circle cx="8" cy="8" r="2.5" stroke="#777" /></TreeIcon>
                    摄像机
                  </TreeRow>
                  <TreeRow $guide $last>
                    <Plus>+</Plus>
                    <Folder size={15} strokeWidth={1} />
                    非时间戳记几何
                  </TreeRow>
                  {blanks.map((i) => <TreeRow key={i} />)}
                </TreeRows>
                <NavScroll>
                  <NavScrollBtn><ChevronLeft size={12} strokeWidth={3} /></NavScrollBtn>
                  <NavScrollThumb />
                </NavScroll>
              </Tree>
              <Sash />
              <Fold $h={26}><FoldArrow />搜索</Fold>
              <Fold $h={24}><FoldArrow />相关性</Fold>
              <Fold $h={24}><FoldArrow />细节</Fold>
            </Nav>
          </Workspace>
        </LeftCol>

        <Dialog>
          <DialogHead>
            <Settings size={14} strokeWidth={2.4} color="#fff" />
            <DialogTitle>显示部件属性</DialogTitle>
            <HeadBtn><RotateCw size={13} strokeWidth={2.4} /></HeadBtn>
            <HeadBtn>?</HeadBtn>
            <HeadBtn><X size={16} strokeWidth={2} /></HeadBtn>
          </DialogHead>
          <DTabs>
            <DTab $w={52} $active>属性</DTab>
            <DTab $w={62}>显示部件</DTab>
            <DTab $w={51}>质量</DTab>
            <DTab $w={63}>部件文件</DTab>
            <DTab $w={51}>预览</DTab>
          </DTabs>
          <Panel>
            <Sect>
              <SectHead $h={24}><SectArrow />关联</SectHead>
              <LineRow $h={25} $mt={6}>
                交互方法
                <Select>传统<ArrowDown /></Select>
              </LineRow>
            </Sect>
            <Sect $grow>
              <SectHead $h={22}><SectArrow />部件属性</SectHead>
              <LineRow $h={20} $mt={7}>
                <Radios>
                  <Radio $on /><RadioText>全部</RadioText>
                  <Radio /><RadioText>必需</RadioText>
                  <Radio /><RadioText>未设置</RadioText>
                </Radios>
              </LineRow>
              <Table>
                <THead>
                  <TH $pad={6}>标题/别名<SortUp /></TH>
                  <TH>值</TH>
                  <TH>单位</TH>
                  <TH $pad={6}>模..</TH>
                  <TH>类型</TH>
                  <TH $pad={7}>只读</TH>
                  <TH $pad={6}>继.</TH>
                </THead>
                <TMid>
                  <TRows>
                    {rows.map((r, i) => (
                      <TRow key={i} $odd={i % 2 === 0}>
                        {r.group ? (
                          <NameCell><Minus /><DbIcon />{r.group}</NameCell>
                        ) : (
                          <NameCell $child>{r.name}</NameCell>
                        )}
                        <TD>{r.value}</TD>
                        <TD>{r.unit}</TD>
                        <TD $pad={7}>{!r.group && <DocIcon />}</TD>
                        <TD $pad={5}>{r.type}</TD>
                        <TD $pad={r.ro === "l" ? 6 : 5}>{r.ro === "f" ? <FloppyIcon /> : r.ro === "l" ? <LockIcon /> : null}</TD>
                        <div />
                      </TRow>
                    ))}
                  </TRows>
                  <VScroll>
                    <VBtn><ChevronUp size={12} strokeWidth={3} /></VBtn>
                    <VThumb />
                    <VRest />
                    <VBtn><ChevronDown size={12} strokeWidth={3} /></VBtn>
                  </VScroll>
                </TMid>
                <HScroll>
                  <HBtn><ChevronLeft size={12} strokeWidth={3} /></HBtn>
                  <HThumb />
                  <HRest />
                  <HBtn><ChevronRight size={12} strokeWidth={3} /></HBtn>
                  <HCorner />
                </HScroll>
              </Table>
              <BtnRow>
                <CheckBox />允许多值
                <BtnSet>
                  <IconBtn $on>
                    <BtnIcon viewBox="0 0 28 28">
                      <path d="M14,25 H6.5 V2.5 H17 L22,7.5 V14 M17,2.5 V7.5 H22" />
                      <circle cx="20" cy="20.5" r="6" /><path d="M20,17 V24 M16.5,20.5 H23.5" />
                    </BtnIcon>
                  </IconBtn>
                  <IconBtn>
                    <BtnIcon viewBox="0 0 28 28" strokeWidth="1.4">
                      <circle cx="7" cy="8" r="3.5" /><ellipse cx="10" cy="22" rx="2.5" ry="3.5" />
                      <path d="M10,9 C15,12 21,10 26,9 C22,15 16,15 14,14 C12,16 11,17 10.5,19 M14,14 C13,10 16,4 20,2 C21,6 19,10 17,13" />
                    </BtnIcon>
                  </IconBtn>
                  <IconBtn>
                    <BtnIcon viewBox="0 0 28 28">
                      <path d="M8,22 H3 V2.5 H15 V7" />
                      <path d="M8,7.5 H19 L25,13.5 V26 H8 z M19,7.5 V13.5 H25" />
                    </BtnIcon>
                  </IconBtn>
                  <IconBtn>
                    <BtnIcon viewBox="0 0 28 28">
                      <path d="M8,24 H3 V6 H8 V3.5 H11 V1.5 H16 V3.5 H19 V6 H23 V10" />
                      <path d="M12,11 H20 L25,16 V26 H12 z M20,11 V16 H25" />
                    </BtnIcon>
                  </IconBtn>
                  <IconBtn><X size={28} strokeWidth={1} /></IconBtn>
                </BtnSet>
              </BtnRow>
              <LineRow $h={24} $mt={2}>类别（可选）<Select><span /><ArrowDown /></Select></LineRow>
              <LineRow $h={24} $mt={3}>标题/别名<Select><span /><ArrowDown /></Select></LineRow>
              <LineRow $h={24} $mt={3}>数据类型<Select>字符串<ArrowDown /></Select></LineRow>
              <LineRow $h={20} $mt={3}>
                <Radios>
                  <Radio $on /><RadioText>值</RadioText>
                  <Radio /><RadioText>表达式公式</RadioText>
                </Radios>
              </LineRow>
              <LineRow $h={23} $mt={2}>值<TextInput /></LineRow>
              <LineRow $h={32} $mt={2}>
                <Dim>添加新属性</Dim>
                <IconBtn><Check size={26} strokeWidth={1} /></IconBtn>
              </LineRow>
            </Sect>
          </Panel>
        </Dialog>

        <Right>
          <RBar>
            <RSlot $w={16}>
              <svg width="10" height="6" viewBox="0 0 10 6"><path d="M0,.5 h10" stroke="#333" /><path d="M0,4.5 h10" stroke="#335" strokeWidth="1.4" /></svg>
            </RSlot>
            <RSlot $w={32}>
              <RIcon viewBox="0 0 20 20" fill="#fff" stroke="#222"><rect x="1.5" y="2" width="13" height="7" /><rect x="4.5" y="9" width="14" height="9" fill="#ccc" /><path d="M4.5,12 h14 M4.5,15 h14 M9,9 v9 M14,9 v9" /><path d="M4,5 h5" /></RIcon>
            </RSlot>
            <RSlot $w={20}>
              <RIcon viewBox="0 0 20 20" fill="#ddd" stroke="#444"><polygon points="1,7 7,3 12,5 12,15 7,18 1,14" /><rect x="8" y="2" width="10" height="14" fill="#fff" /><path d="M9,11 h5 l-2,-2 M14,11 l-2,2" fill="none" /></RIcon>
            </RSlot>
            <RSlot $w={28}>
              <RIcon viewBox="0 0 20 20" fill="none"><path d="M13,3 L3,15 H15" stroke="#222" /><path d="M6,17 Q9,11 7,8" stroke="#c22" strokeDasharray="2 1" /></RIcon>
            </RSlot>
            <RSlot $w={22}>
              <RIcon viewBox="0 0 20 20" fill="none" stroke="#2f9fc4" strokeWidth="1.4"><circle cx="8" cy="7" r="5" /><path d="M18,9 L9,18" /></RIcon>
            </RSlot>
            <RText>更新以获取外部更改</RText>
            <RSep />
          </RBar>
          <ViewTop />
          <ViewLine />
          <Viewport>
            <ModelSvg viewBox="859 212 523 728">
              <path d="M933,302 V359 A124,47 0 0 0 1181,359 V302 z" fill="url(#gCyl)" stroke="#333" />
              <ellipse cx="1057" cy="302" rx="124" ry="47" fill="#868b8c" stroke="#333" />
              <polygon points="1087,532 1217,590 1217,649 1087,589" fill="#959c9e" stroke="#333" />
              <polygon points="1217,590 1338,554 1338,612 1217,649" fill="#878d8f" stroke="#333" />
              <polygon points="1087,532 1209,494 1338,554 1217,590" fill="#868b8d" stroke="#333" />
              <polygon points="944,596 947,610 945,643 941.5,610" fill="#0d3fb8" />
              <polygon points="947,645 968,635 988,634 971,641" fill="#3c9a3c" />
              <polygon points="947,649 966,654 980,664 961,659" fill="#c02f2f" />
              <text x="949" y="594" fontSize="13" fill="#2558c6">ZC</text>
              <text x="970" y="631" fontSize="13" fill="#3f9a4a">YC</text>
              <text x="961" y="677" fontSize="13" fill="#c23a3a">XC</text>
            </ModelSvg>
            <Watermark>UG爱好者论坛 WWW.UGSNX.COM</Watermark>
          </Viewport>
        </Right>
      </Body>

      <FocusDot />
      <RedBox $x={166} $y={182} $w={62} $h={41} />
      <RedBox $x={176} $y={460} $w={129} $h={29} />
      <RedBox $x={204} $y={522} $w={455} $h={31} />
      <ArrowSvg viewBox="0 0 1382 940">
        <polygon points="385,560 384,585 391,580 402,572 396,576" fill="#f01313" />
        <polygon points="388,578 396,574 538,780" fill="#f01313" />
      </ArrowSvg>
      <Note>这里的显示质量，是对的</Note>
    </Root>
  );
}
